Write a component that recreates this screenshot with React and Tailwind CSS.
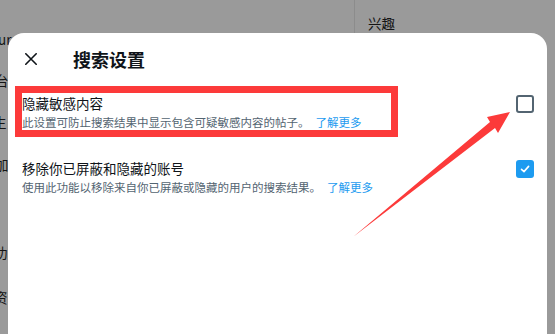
import React from "react";

const font = { fontFamily: '"Noto Sans CJK SC", "Noto Sans", "Liberation Sans", sans-serif' };

function Row({ title, desc, checked }) {
  return (
    <div className="flex items-start justify-between pl-[14px] pr-[13px]">
      <div className="flex flex-col">
        <div className="text-[13.5px] leading-[18px] text-[#0f1419]">{title}</div>
        <div className="mt-[1px] text-[11.5px] leading-[18px] text-[#536471] whitespace-nowrap">
          {desc}
          <span className="ml-[6px] text-[#1d9bf0]">了解更多</span>
        </div>
      </div>
      {checked ? (
        <div className="mt-[1px] w-[18px] h-[18px] rounded-[3px] bg-[#1d9bf0] flex items-center justify-center">
          <svg width="12" height="12" viewBox="0 0 12 12">
            <path d="M2.5 6.3 L5 8.6 L9.6 3.4" fill="none" stroke="white" strokeWidth="1.6" strokeLinecap="round" strokeLinejoin="round" />
          </svg>
        </div>
      ) : (
        <div className="mt-[1px] w-[18px] h-[18px] rounded-[3px] border-2 border-[#536471] bg-white" />
      )}
    </div>
  );
}

export default function App() {
  return (
    <div className="relative w-[555px] h-[334px] overflow-hidden bg-[#9a9a9a]" style={font}>
      {/* page behind the modal */}
      <div className="flex h-full">
        <div className="w-[354px] flex flex-col text-[13.5px] leading-[18px] text-[#141414] whitespace-nowrap">
          <div className="mt-[30px] -ml-[2px]">ur</div>
          <div className="mt-[23px] -ml-[5px]">台</div>
          <div className="mt-[24px] -ml-[7px]">生</div>
          <div className="mt-[24px] -ml-[5px]">加</div>
          <div className="mt-[70px] -ml-[6px]">功</div>
          <div className="mt-[27px] -ml-[6px]">资</div>
        </div>
        <div className="h-[34px] border-l border-[#8c8c8c] pl-[13px] pt-[14px] text-[13.5px] leading-[18px] text-[#141414]">
          兴趣
        </div>
      </div>

      {/* modal */}
      <div className="absolute left-[8px] top-[33px] w-[539px] h-[320px] bg-white rounded-t-[16px]">
        <div className="flex items-center h-[52px]">
          <svg className="ml-[17px]" width="12" height="12" viewBox="0 0 12 12">
            <path d="M0.8 0.8 L11.2 11.2 M11.2 0.8 L0.8 11.2" stroke="#0f1419" strokeWidth="1.6" strokeLinecap="round" />
          </svg>
          <div className="ml-[36px] text-[18px] font-bold leading-[24px] text-[#0f1419]">搜索设置</div>
        </div>
        <div className="pt-[9px] flex flex-col gap-[28px]">
          <Row title="隐藏敏感内容" desc="此设置可防止搜索结果中显示包含可疑敏感内容的帖子。" checked={false} />
          <Row title="移除你已屏蔽和隐藏的账号" desc="使用此功能以移除来自你已屏蔽或隐藏的用户的搜索结果。" checked={true} />
        </div>
      </div>

      {/* annotation: red box */}
      <div className="absolute left-[15px] top-[86px] w-[383px] h-[51px] border-[7px] border-[#fc3a3a]" />

      {/* annotation: arrow */}
      <svg className="absolute left-0 top-0" width="555" height="334" viewBox="0 0 555 334">
        <polygon points="353,237 490,122 487,117 510,112 498,133 495,128" fill="#fc3a3a" />
      </svg>
    </div>
  );
}
